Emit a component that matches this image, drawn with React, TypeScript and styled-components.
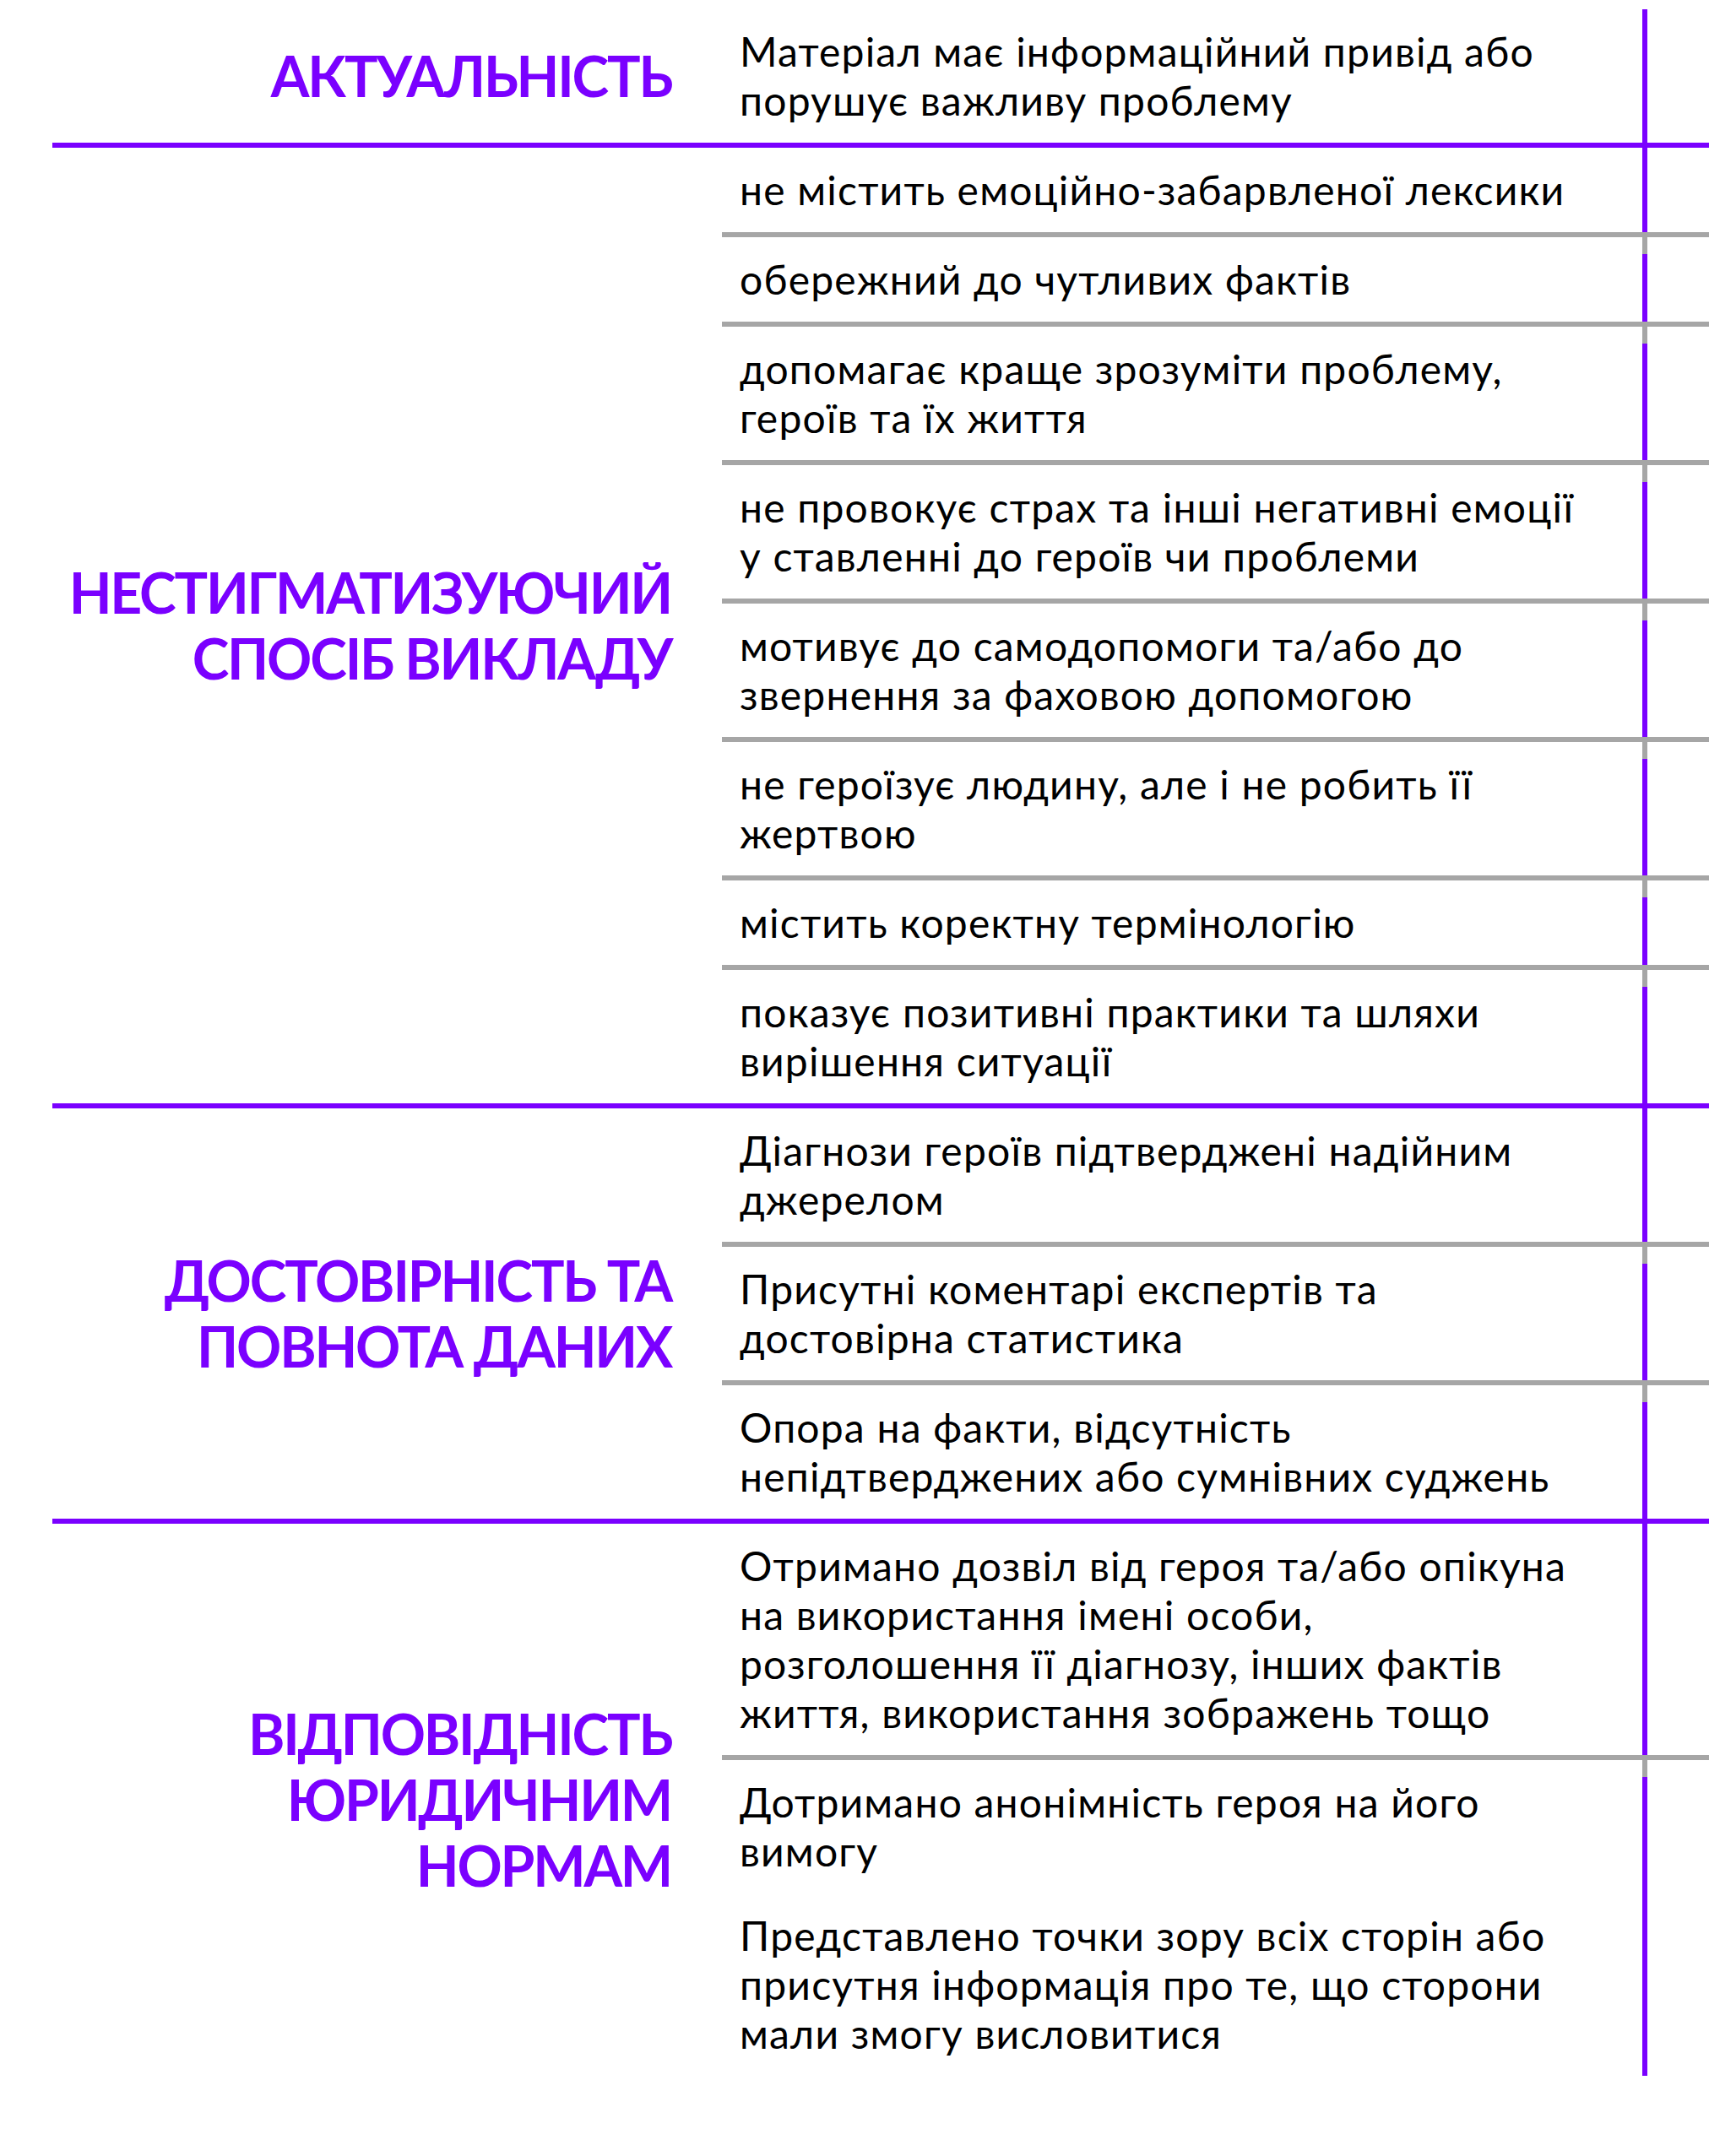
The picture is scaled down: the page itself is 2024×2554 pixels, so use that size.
import React from "react";
import styled, { createGlobalStyle } from "styled-components";

const PURPLE = "#7a00ff";
const GRAY = "#a6a6a6";

const GlobalStyle = createGlobalStyle`
  html, body { margin: 0; padding: 0; background: #ffffff; }
  body { font-family: Lato, "Noto Sans", sans-serif; }
`;

const Page = styled.main`
  width: 2024px;
  min-height: 2554px;
  box-sizing: border-box;
  padding: 11px 0 0 62px;
  background: #ffffff;
`;

const Section = styled.section<{ $last?: boolean }>`
  display: grid;
  grid-template-columns: 793px 1fr;
  border-bottom: ${(p) => (p.$last ? "none" : `6px solid ${PURPLE}`)};
`;

const Label = styled.h2`
  margin: 0;
  display: flex;
  align-items: center;
  justify-content: flex-end;
  padding-right: 60px;
  text-align: right;
  font-family: Lato, "Noto Sans", sans-serif;
  font-weight: 700;
  font-size: 66px;
  line-height: 78px;
  letter-spacing: -2.2px;
  color: ${PURPLE};
  white-space: nowrap;
`;

const Rows = styled.div`
  display: flex;
  flex-direction: column;
`;

const Row = styled.div<{ $sep?: boolean }>`
  display: grid;
  grid-template-columns: 1090px 1fr;
  border-top: ${(p) => (p.$sep ? `6px solid ${GRAY}` : "none")};
`;

const Text = styled.p`
  margin: 0;
  padding: 21px 0 21px 21px;
  font-family: Lato, "Noto Sans", sans-serif;
  font-weight: 400;
  font-size: 48px;
  line-height: 58px;
  letter-spacing: 1.2px;
  color: #000000;
  white-space: nowrap;
`;

const Side = styled.div<{ $sep?: boolean }>`
  border-left: 6px solid ${PURPLE};
  border-image: ${(p) =>
    p.$sep
      ? `linear-gradient(to bottom, ${GRAY} 0, ${GRAY} 21px, ${PURPLE} 21px, ${PURPLE} 100%) 1`
      : "none"};
`;

type Group = { label: string[]; items: string[][] };

const data: Group[] = [
  {
    label: ["АКТУАЛЬНІСТЬ"],
    items: [["Матеріал має інформаційний привід або", "порушує важливу проблему"]],
  },
  {
    label: ["НЕСТИГМАТИЗУЮЧИЙ", "СПОСІБ ВИКЛАДУ"],
    items: [
      ["не містить емоційно-забарвленої лексики"],
      ["обережний до чутливих фактів"],
      ["допомагає краще зрозуміти проблему,", "героїв та їх життя"],
      ["не провокує страх та інші негативні емоції", "у ставленні до героїв чи проблеми"],
      ["мотивує до самодопомоги та/або до", "звернення за фаховою допомогою"],
      ["не героїзує людину, але і не робить її", "жертвою"],
      ["містить коректну термінологію"],
      ["показує позитивні практики та шляхи", "вирішення ситуації"],
    ],
  },
  {
    label: ["ДОСТОВІРНІСТЬ ТА", "ПОВНОТА ДАНИХ"],
    items: [
      ["Діагнози героїв підтверджені надійним", "джерелом"],
      ["Присутні коментарі експертів та", "достовірна статистика"],
      ["Опора на факти, відсутність", "непідтверджених або сумнівних суджень"],
    ],
  },
  {
    label: ["ВІДПОВІДНІСТЬ", "ЮРИДИЧНИМ", "НОРМАМ"],
    items: [
      [
        "Отримано дозвіл від героя та/або опікуна",
        "на використання імені особи,",
        "розголошення її діагнозу, інших фактів",
        "життя, використання зображень тощо",
      ],
      ["Дотримано анонімність героя на його", "вимогу"],
      [
        "Представлено точки зору всіх сторін або",
        "присутня інформація про те, що сторони",
        "мали змогу висловитися",
      ],
    ],
  },
];

const Lines: React.FC<{ lines: string[] }> = ({ lines }) => (
  <>
    {lines.map((l, i) => (
      <React.Fragment key={i}>
        {i > 0 && <br />}
        {l}
      </React.Fragment>
    ))}
  </>
);

export default function App() {
  return (
    <>
      <GlobalStyle />
      <Page>
        {data.map((g, gi) => {
          const lastGroup = gi === data.length - 1;
          return (
            <Section key={gi} $last={lastGroup}>
              <Label>
                <span>
                  <Lines lines={g.label} />
                </span>
              </Label>
              <Rows>
                {g.items.map((it, ii) => {
                  const sep = ii > 0 && !(lastGroup && ii === g.items.length - 1);
                  return (
                    <Row key={ii} $sep={sep}>
                      <Text>
                        <Lines lines={it} />
                      </Text>
                      <Side $sep={sep} />
                    </Row>
                  );
                })}
              </Rows>
            </Section>
          );
        })}
      </Page>
    </>
  );
}
